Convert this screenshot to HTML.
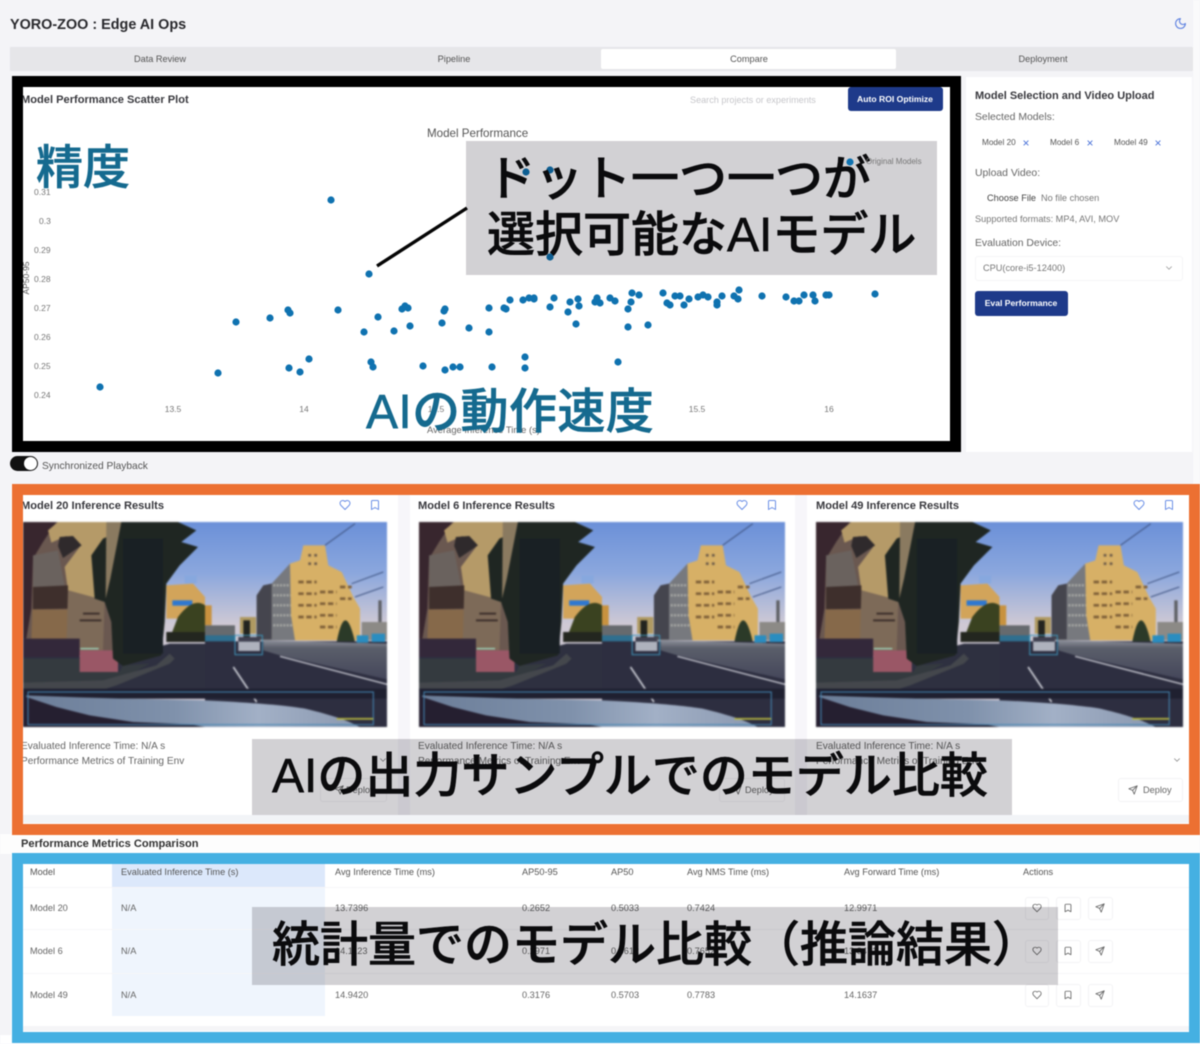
<!DOCTYPE html>
<html lang="ja">
<head>
<meta charset="utf-8">
<title>YORO-ZOO : Edge AI Ops</title>
<style>
html,body{margin:0;padding:0;width:1200px;height:1044px;overflow:hidden;background:#f4f4f7}
body{position:relative;font-family:"Liberation Sans","Noto Sans CJK JP",sans-serif;color:#444}
#root{position:absolute;left:0;top:0;width:1200px;height:1044px;overflow:hidden;filter:blur(.4px);isolation:isolate}
.a{position:absolute}
.t{position:absolute;white-space:nowrap;line-height:14px;height:14px}
.c{transform:translateX(-50%)}
.s{font-size:9.2px;color:#555}
.k{font-size:8.5px;color:#777}
.b{font-weight:bold}
.h{font-size:11.1px;font-weight:bold;color:#3a3a3f}
.l{font-size:10.4px;color:#666}
.e{font-size:10.1px;color:#666}
.x{font-size:12px;color:#4a72d8}
.ov{position:absolute;background:#d2d1d4;mix-blend-mode:multiply}
.jp{position:absolute;white-space:nowrap;font-family:"Liberation Sans","Noto Sans CJK JP",sans-serif;font-size:48px;line-height:56px;height:56px;color:#0b0b0d;font-weight:500;-webkit-text-stroke:.6px currentColor}
.tl{color:#156a8f}
.fr{position:absolute;box-sizing:border-box;background:transparent}
svg.i{position:absolute;fill:none;stroke-width:2;stroke-linecap:round;stroke-linejoin:round}
.btn{position:absolute;box-sizing:border-box;border:1px solid #f3f3f5;border-radius:3px;background:#fff}
.img{position:absolute;top:522px;height:205px;filter:blur(.8px)}
.row{position:absolute;left:23px;width:1166px;height:1px;background:#f6f6f8}
</style>
</head>
<body>
<div id="root">
<svg width="0" height="0" style="position:absolute">
<defs>
<symbol id="heart" viewBox="0 0 24 24"><path d="M19 14c1.49-1.46 3-3.21 3-5.5A5.5 5.5 0 0 0 16.5 3c-1.76 0-3 .5-4.5 2-1.5-1.5-2.74-2-4.5-2A5.5 5.5 0 0 0 2 8.5c0 2.3 1.5 4.05 3 5.5l7 7Z"/></symbol>
<symbol id="mark" viewBox="0 0 24 24"><path d="m19 21-7-4-7 4V5a2 2 0 0 1 2-2h10a2 2 0 0 1 2 2v16z"/></symbol>
<symbol id="send" viewBox="0 0 24 24"><path d="m22 2-7 20-4-9-9-4Z"/><path d="M22 2 11 13"/></symbol>
<symbol id="chev" viewBox="0 0 24 24"><path d="m6 9 6 6 6-6"/></symbol>
<symbol id="moon" viewBox="0 0 24 24"><path d="M12 3a6 6 0 0 0 9 9 9 9 0 1 1-9-9Z"/></symbol>
<linearGradient id="sky" x1="0" y1="0" x2="0" y2="1"><stop offset="0" stop-color="#6b90d8"/><stop offset=".25" stop-color="#8ba7dd"/><stop offset=".5" stop-color="#cfc9d4"/></linearGradient>
<linearGradient id="hood" x1="0" y1="0" x2="1" y2="0"><stop offset="0" stop-color="#6b7d98"/><stop offset=".45" stop-color="#7f91ab"/><stop offset=".7" stop-color="#a2b0c6"/><stop offset="1" stop-color="#8a98b0"/></linearGradient>
<linearGradient id="rail" x1="0" y1="0" x2="0" y2="1"><stop offset="0" stop-color="#8c8f9a"/><stop offset=".2" stop-color="#5a5e6a"/><stop offset="1" stop-color="#44465a"/></linearGradient>
<symbol id="scene" viewBox="0 0 1092 615" preserveAspectRatio="none">
<rect width="1092" height="615" fill="url(#sky)"/>
<!-- left building -->
<path d="M0 0H340L340 400H0Z" fill="#6a5850"/>
<path d="M0 0H100L60 60 30 110 25 260 10 350H0Z" fill="#38262e"/>
<path d="M75 25L105 0H325L300 30 260 65 245 235 135 205 125 135 170 75 130 42 85 62Z" fill="#b59a68"/>
<path d="M110 45L150 42 176 70 120 108 105 72Z" fill="#2f2a2c"/>
<path d="M30 100L105 85 125 190 30 200Z" fill="#6a625e"/>
<path d="M30 195L135 190 135 260 30 262Z" fill="#3e2f2c"/>
<path d="M28 262H135V350H25Z" fill="#86694a"/>
<path d="M135 205L245 235 240 385H130Z" fill="#7d6a58"/>
<path d="M170 295H235M180 275H230" stroke="#3c2f2a" stroke-width="6"/>
<path d="M0 350H170V410H0Z" fill="#33283a"/>
<!-- ground left -->
<path d="M0 405H300L440 365H546V520H0Z" fill="#2e3040"/>
<path d="M0 410H170V450H290L300 430 380 425 240 500H0Z" fill="#343a3f"/>
<path d="M0 500V482L240 475 400 430 440 395 455 410 440 425 280 490 240 503Z" fill="#44474c"/>
<rect x="170" y="385" width="115" height="65" fill="#9a5766"/>
<rect x="172" y="378" width="55" height="4" fill="#9fdcc0"/>
<!-- tree -->
<path d="M290 0H465L520 25 475 60 525 75 470 130 430 185 425 300 415 400 300 432 270 410 265 300 245 240 215 230 205 100 240 50 285 30Z" fill="#1f2622"/>
<path d="M300 50H420V395H300Z" fill="#192024"/>
<path d="M250 0L295 0 262 170 248 230Z" fill="#8a7a60"/>
<!-- small building -->
<path d="M430 190L510 185 546 225V290H430Z" fill="#d2a45a"/>
<rect x="485" y="160" width="36" height="24" fill="#87a8de"/>
<rect x="448" y="235" width="60" height="16" fill="#2f78d0"/>
<path d="M465 285Q510 225 546 250V350H440Z" fill="#3a4220"/>
<rect x="430" y="330" width="116" height="30" fill="#23261f"/>
<g transform="translate(546,0)">
<path d="M360 70L450 5M440 185L535 150M450 225L535 195" stroke="#3f5482" stroke-width="3" fill="none"/>
<rect x="0" y="250" width="20" height="60" fill="#c8923f"/>
<rect x="0" y="310" width="90" height="40" fill="#666a6e"/>
<rect x="105" y="285" width="48" height="50" fill="#b09a62"/>
<rect x="115" y="295" width="20" height="55" fill="#23241f"/>
<!-- main building -->
<path d="M155 220L175 190 200 185 255 125 272 355H155Z" fill="#77797e"/>
<path d="M155 220L175 190 200 185V352H155Z" fill="#45454e"/>
<path d="M205 190H255M205 220H258M205 250H260M205 280H262M205 310H264" stroke="#a9aaa6" stroke-width="7" stroke-dasharray="6 4"/>
<path d="M255 125L285 115 295 70H360L370 130 410 150 445 225 465 260V355H270L258 280Z" fill="#d7b066"/>
<path d="M280 180H335M280 215H335M280 250H335M280 285H335M345 210H395M345 245H395M345 280H395M345 315H395M405 195H440M405 230H440" stroke="#7e5f38" stroke-width="8" stroke-dasharray="16 8"/>
<path d="M310 100H345M310 125H345" stroke="#6b5a48" stroke-width="8" stroke-dasharray="8 10"/>
<path d="M395 360Q420 230 450 360Z" fill="#2b3a28"/>
<rect x="470" y="300" width="76" height="55" fill="#8c8a86"/>
<rect x="520" y="235" width="10" height="65" fill="#5f6166"/>
<!-- road -->
<path d="M-546 0" />
<rect x="0" y="340" width="90" height="20" fill="#2f6f8f"/>
<rect x="0" y="358" width="546" height="257" fill="#2d2e40"/>
<rect x="455" y="340" width="35" height="22" fill="#2a8dc0"/>
<rect x="500" y="335" width="40" height="25" fill="#2a8dc0"/>
<path d="M175 355L546 365V472L225 400 175 385Z" fill="url(#rail)"/>
<path d="M225 403L546 487" stroke="#c8c9d2" stroke-width="4"/>
<path d="M85 435L155 540" stroke="#c8cad2" stroke-width="5"/>
<rect x="100" y="345" width="65" height="42" fill="#aeb2bd"/>
<rect x="100" y="345" width="65" height="14" fill="#3f4050"/>
<rect x="90" y="340" width="82" height="58" fill="none" stroke="#3f93b8" stroke-width="3"/>
</g>
<!-- hood -->
<rect x="0" y="500" width="1092" height="30" fill="#1f2030"/>
<path d="M10 520C200 528 400 532 546 535 700 542 800 552 846 560 930 580 980 598 1010 615H0Z" fill="url(#hood)"/>
<path d="M10 525L100 555 200 580 330 600 500 607 546 615H0V525Z" fill="#251f30"/>
<rect x="15" y="510" width="1036" height="98" fill="none" stroke="#4587b4" stroke-width="3"/>
<rect x="941" y="588" width="110" height="5" fill="#b8b840"/>
</symbol>
</defs>
</svg>

<!-- page edges -->
<div class="a" style="left:1193px;top:0;width:7px;height:484px;background:#fafafb"></div>

<!-- header -->
<div class="t" style="left:10px;top:15px;height:18px;line-height:18px;font-size:14.4px;font-weight:bold;color:#2a2a2e;transform:translateY(1px)">YORO-ZOO : Edge AI Ops</div>
<svg class="i" style="left:1174px;top:17px;stroke:#5b7fe0" width="13" height="13"><use href="#moon"/></svg>

<!-- tabs -->
<div class="a" style="left:10px;top:47px;width:1183px;height:24px;background:#e6e6e9"></div>
<div class="a" style="left:601px;top:49px;width:295px;height:20px;background:#fff;border-radius:2px"></div>
<div class="t c" style="left:160px;top:52px;font-size:9.2px;color:#555">Data Review</div>
<div class="t c" style="left:454px;top:52px;font-size:9.2px;color:#555">Pipeline</div>
<div class="t c" style="left:749px;top:52px;font-size:9.2px;color:#555">Compare</div>
<div class="t c" style="left:1043px;top:52px;font-size:9.2px;color:#555">Deployment</div>

<!-- chart card -->
<div class="a" style="left:23px;top:87px;width:927px;height:354px;background:#fff"></div>
<div class="t h" style="left:21px;top:93px">Model Performance Scatter Plot</div>
<div class="t" style="left:690px;top:93px;font-size:9.1px;color:#c6c6ca">Search projects or experiments</div>
<div class="a" style="left:848px;top:87px;width:95px;height:24px;background:#1e3a8a;border-radius:3px"></div>
<div class="t c b" style="left:895px;top:92px;font-size:8.6px;color:#fff">Auto ROI Optimize</div>
<div class="t" style="left:427px;top:127px;font-size:11.6px;color:#555">Model Performance</div>
<div class="t k" style="left:34px;top:185px">0.31</div>
<div class="t k" style="left:39px;top:214px">0.3</div>
<div class="t k" style="left:34px;top:243px">0.29</div>
<div class="t k" style="left:34px;top:272px">0.28</div>
<div class="t k" style="left:34px;top:301px">0.27</div>
<div class="t k" style="left:34px;top:330px">0.26</div>
<div class="t k" style="left:34px;top:359px">0.25</div>
<div class="t k" style="left:34px;top:388px">0.24</div>
<div class="t k c" style="left:173px;top:402px">13.5</div>
<div class="t k c" style="left:304px;top:402px">14</div>
<div class="t k c" style="left:436px;top:402px">14.5</div>
<div class="t k c" style="left:697px;top:402px">15.5</div>
<div class="t k c" style="left:829px;top:402px">16</div>
<div class="t s" style="left:427px;top:423px;color:#666;font-size:9.4px">Average Inference Time (s)</div>
<div class="t k" style="left:8px;top:271px;transform:rotate(-90deg);width:36px;text-align:center;color:#555">AP50-95</div>

<svg class="a" style="left:0;top:0" width="1200" height="460" fill="#0f72b0">
<g>
<circle cx="331" cy="200" r="3.6"/><circle cx="369" cy="274" r="3.6"/><circle cx="526" cy="172" r="3.6"/><circle cx="550" cy="170" r="3.6"/><circle cx="550" cy="257" r="3.6"/>
<circle cx="100" cy="387" r="3.6"/><circle cx="218" cy="373" r="3.6"/><circle cx="236" cy="322" r="3.6"/><circle cx="270" cy="318" r="3.6"/><circle cx="288" cy="310" r="3.6"/><circle cx="290" cy="313" r="3.6"/><circle cx="338" cy="310" r="3.6"/><circle cx="378" cy="317" r="3.6"/><circle cx="364" cy="332" r="3.6"/><circle cx="394" cy="331" r="3.6"/><circle cx="410" cy="326" r="3.6"/><circle cx="402" cy="309" r="3.6"/><circle cx="405" cy="306" r="3.6"/><circle cx="408" cy="308" r="3.6"/><circle cx="442" cy="323" r="3.6"/><circle cx="444" cy="311" r="3.6"/><circle cx="445" cy="309" r="3.6"/><circle cx="469" cy="328" r="3.6"/><circle cx="489" cy="332" r="3.6"/><circle cx="489" cy="308" r="3.6"/><circle cx="504" cy="308" r="3.6"/><circle cx="506" cy="309" r="3.6"/><circle cx="510" cy="300" r="3.6"/><circle cx="523" cy="300" r="3.6"/><circle cx="529" cy="298" r="3.6"/><circle cx="534" cy="298" r="3.6"/><circle cx="534" cy="299" r="3.6"/><circle cx="554" cy="298" r="3.6"/><circle cx="550" cy="307" r="3.6"/><circle cx="570" cy="302" r="3.6"/><circle cx="568" cy="312" r="3.6"/><circle cx="576" cy="324" r="3.6"/><circle cx="578" cy="299" r="3.6"/><circle cx="579" cy="306" r="3.6"/><circle cx="595" cy="302" r="3.6"/><circle cx="597" cy="298" r="3.6"/><circle cx="600" cy="303" r="3.6"/>
<circle cx="289" cy="368" r="3.6"/><circle cx="300" cy="372" r="3.6"/><circle cx="309" cy="359" r="3.6"/><circle cx="371" cy="362" r="3.6"/><circle cx="373" cy="367" r="3.6"/><circle cx="423" cy="366" r="3.6"/><circle cx="445" cy="370" r="3.6"/><circle cx="453" cy="367" r="3.6"/><circle cx="460" cy="367" r="3.6"/><circle cx="492" cy="367" r="3.6"/><circle cx="525" cy="357" r="3.6"/><circle cx="525" cy="368" r="3.6"/>
<circle cx="610" cy="298" r="3.6"/><circle cx="615" cy="301" r="3.6"/><circle cx="628" cy="309" r="3.6"/><circle cx="631" cy="302" r="3.6"/><circle cx="632" cy="293" r="3.6"/><circle cx="639" cy="295" r="3.6"/><circle cx="663" cy="293" r="3.6"/><circle cx="667" cy="303" r="3.6"/><circle cx="670" cy="305" r="3.6"/><circle cx="675" cy="296" r="3.6"/><circle cx="680" cy="296" r="3.6"/><circle cx="684" cy="305" r="3.6"/><circle cx="689" cy="299" r="3.6"/><circle cx="698" cy="297" r="3.6"/><circle cx="703" cy="295" r="3.6"/><circle cx="708" cy="297" r="3.6"/><circle cx="717" cy="302" r="3.6"/><circle cx="717" cy="305" r="3.6"/><circle cx="722" cy="296" r="3.6"/><circle cx="734" cy="296" r="3.6"/><circle cx="739" cy="290" r="3.6"/><circle cx="738" cy="299" r="3.6"/><circle cx="762" cy="296" r="3.6"/><circle cx="786" cy="297" r="3.6"/><circle cx="794" cy="301" r="3.6"/><circle cx="799" cy="301" r="3.6"/><circle cx="804" cy="295" r="3.6"/><circle cx="813" cy="295" r="3.6"/><circle cx="815" cy="301" r="3.6"/><circle cx="826" cy="295" r="3.6"/><circle cx="829" cy="295" r="3.6"/><circle cx="875" cy="294" r="3.6"/><circle cx="628" cy="327" r="3.6"/><circle cx="648" cy="325" r="3.6"/><circle cx="618" cy="362" r="3.6"/>
</g>
</svg>

<!-- right panel -->
<div class="a" style="left:966px;top:77px;width:226px;height:375px;background:#fff"></div>
<div class="t h" style="left:975px;top:89px;font-size:11px">Model Selection and Video Upload</div>
<div class="t l" style="left:975px;top:110px;transform:translateY(1px)">Selected Models:</div>
<div class="t" style="left:982px;top:136px;font-size:8.2px;color:#555">Model 20</div>
<div class="t x c" style="left:1026px;top:136px">×</div>
<div class="t" style="left:1050px;top:136px;font-size:8.2px;color:#555">Model 6</div>
<div class="t x c" style="left:1090px;top:136px">×</div>
<div class="t" style="left:1114px;top:136px;font-size:8.2px;color:#555">Model 49</div>
<div class="t x c" style="left:1158px;top:136px">×</div>
<div class="t l" style="left:975px;top:167px">Upload Video:</div>
<div class="t s" style="left:987px;top:191px;color:#444">Choose File</div>
<div class="t s" style="left:1041px;top:191px;color:#777">No file chosen</div>
<div class="t s" style="left:975px;top:212px;color:#777">Supported formats: MP4, AVI, MOV</div>
<div class="t l" style="left:975px;top:237px">Evaluation Device:</div>
<div class="a" style="left:975px;top:256px;width:208px;height:25px;box-sizing:border-box;border:1px solid #f5f5f7;border-radius:3px"></div>
<div class="t s" style="left:983px;top:261px;color:#777">CPU(core-i5-12400)</div>
<svg class="i" style="left:1164px;top:263px;stroke:#999" width="10" height="10"><use href="#chev"/></svg>
<div class="a" style="left:975px;top:291px;width:93px;height:25px;background:#1e3a8a;border-radius:3px"></div>
<div class="t c b" style="left:1021px;top:296px;font-size:8.6px;color:#fff">Eval Performance</div>

<!-- toggle -->
<div class="a" style="left:10px;top:456px;width:28px;height:15px;background:#111;border-radius:8px"></div>
<div class="a" style="left:24px;top:457px;width:13px;height:13px;background:#fff;border-radius:50%"></div>
<div class="t" style="left:42px;top:460px;font-size:10.2px;color:#555">Synchronized Playback</div>

<!-- inference cards -->
<div class="a" style="left:11px;top:484px;width:1189px;height:350px;background:#fff"></div>
<div class="a" style="left:398px;top:495px;width:12px;height:320px;background:#f7f6fa"></div>
<div class="a" style="left:795px;top:495px;width:12px;height:320px;background:#f7f6fa"></div>
<div class="a" style="left:23px;top:815px;width:1166px;height:8px;background:#f2f4f7"></div>

<div class="t h" style="left:21px;top:499px">Model 20 Inference Results</div>
<div class="t h" style="left:418px;top:499px">Model 6 Inference Results</div>
<div class="t h" style="left:816px;top:499px">Model 49 Inference Results</div>
<svg class="i" style="left:339px;top:499px;stroke:#6c90e6" width="12" height="12"><use href="#heart"/></svg>
<svg class="i" style="left:369px;top:499px;stroke:#6c90e6" width="12" height="12"><use href="#mark"/></svg>
<svg class="i" style="left:736px;top:499px;stroke:#6c90e6" width="12" height="12"><use href="#heart"/></svg>
<svg class="i" style="left:766px;top:499px;stroke:#6c90e6" width="12" height="12"><use href="#mark"/></svg>
<svg class="i" style="left:1133px;top:499px;stroke:#6c90e6" width="12" height="12"><use href="#heart"/></svg>
<svg class="i" style="left:1163px;top:499px;stroke:#6c90e6" width="12" height="12"><use href="#mark"/></svg>

<svg class="img" style="left:23px;width:364px"><use href="#scene" width="364" height="205"/></svg>
<svg class="img" style="left:419px;width:366px"><use href="#scene" width="366" height="205"/></svg>
<svg class="img" style="left:816px;width:367px"><use href="#scene" width="367" height="205"/></svg>

<div class="t e" style="left:21px;top:740px">Evaluated Inference Time: N/A s</div>
<div class="t e" style="left:21px;top:755px">Performance Metrics of Training Env</div>
<div class="t e" style="left:418px;top:740px">Evaluated Inference Time: N/A s</div>
<div class="t e" style="left:418px;top:755px">Performance Metrics of Training Env</div>
<div class="t e" style="left:816px;top:740px">Evaluated Inference Time: N/A s</div>
<div class="t e" style="left:816px;top:755px">Performance Metrics of Training Env</div>
<svg class="i" style="left:378px;top:755px;stroke:#888" width="10" height="10"><use href="#chev"/></svg>
<svg class="i" style="left:1172px;top:755px;stroke:#888" width="10" height="10"><use href="#chev"/></svg>

<div class="btn" style="left:320px;top:778px;width:67px;height:24px"></div>
<div class="btn" style="left:719px;top:778px;width:66px;height:24px"></div>
<div class="btn" style="left:1118px;top:778px;width:65px;height:24px"></div>
<svg class="i" style="left:334px;top:785px;stroke:#666" width="10" height="10"><use href="#send"/></svg>
<svg class="i" style="left:732px;top:785px;stroke:#666" width="10" height="10"><use href="#send"/></svg>
<svg class="i" style="left:1128px;top:785px;stroke:#666" width="10" height="10"><use href="#send"/></svg>
<div class="t s" style="left:346px;top:783px;color:#666">Deploy</div>
<div class="t s" style="left:745px;top:783px;color:#666">Deploy</div>
<div class="t s" style="left:1143px;top:783px;color:#666">Deploy</div>

<!-- metrics -->
<div class="a" style="left:0;top:834px;width:1200px;height:20px;background:#fdfdfd"></div>
<div class="t h" style="left:21px;top:837px;color:#333">Performance Metrics Comparison</div>
<div class="a" style="left:11px;top:853px;width:1189px;height:191px;background:#fff"></div>
<div class="a" style="left:112px;top:864px;width:213px;height:23px;background:#dce8fb"></div>
<div class="a" style="left:112px;top:887px;width:213px;height:129px;background:#eff5fd"></div>
<div class="a" style="left:23px;top:1026px;width:1166px;height:5px;background:#f5f5f7"></div>
<div class="row" style="top:887px"></div>
<div class="row" style="top:929px"></div>
<div class="row" style="top:973px"></div>

<div class="t s" style="left:30px;top:865px">Model</div>
<div class="t s" style="left:121px;top:865px">Evaluated Inference Time (s)</div>
<div class="t s" style="left:335px;top:865px">Avg Inference Time (ms)</div>
<div class="t s" style="left:522px;top:865px">AP50-95</div>
<div class="t s" style="left:611px;top:865px">AP50</div>
<div class="t s" style="left:687px;top:865px">Avg NMS Time (ms)</div>
<div class="t s" style="left:844px;top:865px">Avg Forward Time (ms)</div>
<div class="t s" style="left:1023px;top:865px">Actions</div>

<div class="t s" style="left:30px;top:901px;color:#666">Model 20</div>
<div class="t s" style="left:121px;top:901px;color:#666">N/A</div>
<div class="t s" style="left:335px;top:901px;color:#666">13.7396</div>
<div class="t s" style="left:522px;top:901px;color:#666">0.2652</div>
<div class="t s" style="left:611px;top:901px;color:#666">0.5033</div>
<div class="t s" style="left:687px;top:901px;color:#666">0.7424</div>
<div class="t s" style="left:844px;top:901px;color:#666">12.9971</div>

<div class="t s" style="left:30px;top:944px;color:#666">Model 6</div>
<div class="t s" style="left:121px;top:944px;color:#666">N/A</div>
<div class="t s" style="left:335px;top:944px;color:#666">14.1123</div>
<div class="t s" style="left:522px;top:944px;color:#666">0.2971</div>
<div class="t s" style="left:611px;top:944px;color:#666">0.5612</div>
<div class="t s" style="left:687px;top:944px;color:#666">0.7652</div>
<div class="t s" style="left:844px;top:944px;color:#666">13.3471</div>

<div class="t s" style="left:30px;top:988px;color:#666">Model 49</div>
<div class="t s" style="left:121px;top:988px;color:#666">N/A</div>
<div class="t s" style="left:335px;top:988px;color:#666">14.9420</div>
<div class="t s" style="left:522px;top:988px;color:#666">0.3176</div>
<div class="t s" style="left:611px;top:988px;color:#666">0.5703</div>
<div class="t s" style="left:687px;top:988px;color:#666">0.7783</div>
<div class="t s" style="left:844px;top:988px;color:#666">14.1637</div>

<div class="btn" style="left:1025px;top:897px;width:24px;height:23px"></div>
<div class="btn" style="left:1056px;top:897px;width:25px;height:23px"></div>
<div class="btn" style="left:1088px;top:897px;width:25px;height:23px"></div>
<div class="btn" style="left:1025px;top:940px;width:24px;height:23px"></div>
<div class="btn" style="left:1056px;top:940px;width:25px;height:23px"></div>
<div class="btn" style="left:1088px;top:940px;width:25px;height:23px"></div>
<div class="btn" style="left:1025px;top:984px;width:24px;height:23px"></div>
<div class="btn" style="left:1056px;top:984px;width:25px;height:23px"></div>
<div class="btn" style="left:1088px;top:984px;width:25px;height:23px"></div>

<svg class="i" style="left:1032px;top:903px;stroke:#666" width="10" height="10"><use href="#heart"/></svg>
<svg class="i" style="left:1063px;top:903px;stroke:#666" width="10" height="10"><use href="#mark"/></svg>
<svg class="i" style="left:1095px;top:903px;stroke:#666" width="10" height="10"><use href="#send"/></svg>
<svg class="i" style="left:1032px;top:946px;stroke:#666" width="10" height="10"><use href="#heart"/></svg>
<svg class="i" style="left:1063px;top:946px;stroke:#666" width="10" height="10"><use href="#mark"/></svg>
<svg class="i" style="left:1095px;top:946px;stroke:#666" width="10" height="10"><use href="#send"/></svg>
<svg class="i" style="left:1032px;top:990px;stroke:#666" width="10" height="10"><use href="#heart"/></svg>
<svg class="i" style="left:1063px;top:990px;stroke:#666" width="10" height="10"><use href="#mark"/></svg>
<svg class="i" style="left:1095px;top:990px;stroke:#666" width="10" height="10"><use href="#send"/></svg>

<!-- annotation frames -->
<div class="fr" style="left:12px;top:76px;width:949px;height:376px;border:11px solid #000"></div>
<div class="fr" style="left:12px;top:484px;width:1188px;height:351px;border:11px solid #ec7032"></div>
<div class="fr" style="left:12px;top:853px;width:1188px;height:190px;border:11px solid #45b0e2"></div>
<div class="a" style="left:0;top:1035px;width:12px;height:9px;background:#fff"></div>
<div class="a" style="left:0;top:1043px;width:1200px;height:1px;background:#fff"></div>

<!-- annotation overlays -->
<div class="ov" style="left:466px;top:141px;width:471px;height:134px"></div>
<div class="jp" style="left:487px;top:152px">ドット一つ一つが</div>
<div class="jp" style="left:487px;top:208px">選択可能なAIモデル</div>
<svg class="a" style="left:370px;top:200px" width="105" height="75"><path d="M7 66L97 8" stroke="#050505" stroke-width="3.4" fill="none"/></svg>
<svg class="a" style="left:844px;top:156px" width="12" height="12"><circle cx="6" cy="6" r="3.6" fill="#0f72b0"/></svg>
<div class="t" style="left:866px;top:155px;font-size:8px;color:#777">Original Models</div>

<div class="jp tl" style="left:36px;top:140px;font-size:47px">精度</div>
<div class="jp tl" style="left:366px;top:385px;letter-spacing:.4px">AIの動作速度</div>

<div class="ov" style="left:252px;top:739px;width:760px;height:76px"></div>
<div class="jp" style="left:272px;top:749px">AIの出力サンプルでのモデル比較</div>

<div class="ov" style="left:252px;top:907px;width:806px;height:78px"></div>
<div class="jp" style="left:272px;top:918px">統計量でのモデル比較（推論結果）</div>
</div>
</body>
</html>
